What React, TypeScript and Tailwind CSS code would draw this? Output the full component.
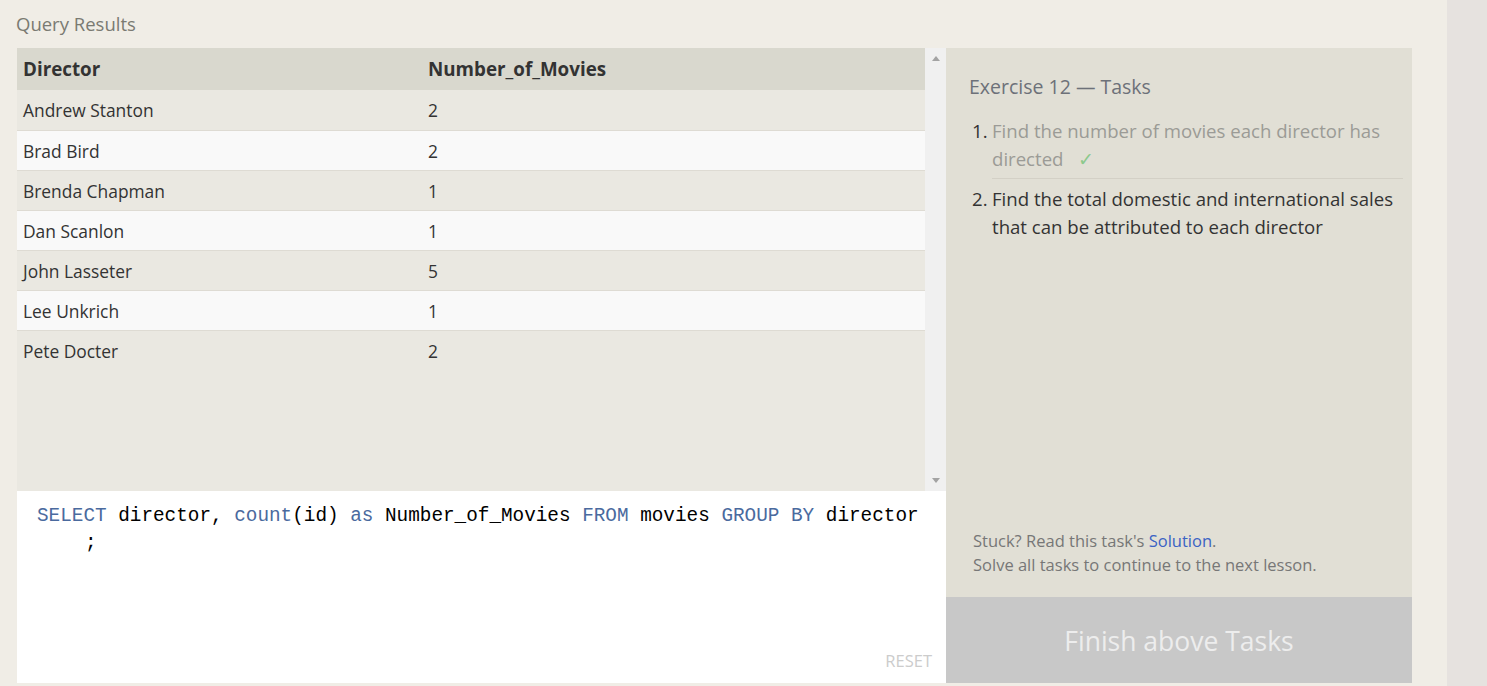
import React from "react";

const rows = [
  { director: "Andrew Stanton", count: 2 },
  { director: "Brad Bird", count: 2 },
  { director: "Brenda Chapman", count: 1 },
  { director: "Dan Scanlon", count: 1 },
  { director: "John Lasseter", count: 5 },
  { director: "Lee Unkrich", count: 1 },
  { director: "Pete Docter", count: 2 },
];

const sans = "font-['Open_Sans','Noto_Sans',sans-serif]";

function Kw({ children }: { children: React.ReactNode }) {
  return <span className="text-[#4a6a9e]">{children}</span>;
}

export default function App() {
  return (
    <div className={`flex h-[686px] w-[1487px] overflow-hidden bg-[#f0ede6] ${sans}`}>
      <div className="flex w-[1447px] flex-col pl-[17px]">
        <div className="-ml-[1px] h-[48px] pt-[10px] text-[18.5px] leading-[28px] text-[#7a7a72]">Query Results</div>
        <div className="flex h-[635px]">
          {/* left column */}
          <div className="flex w-[929px] flex-col">
            <div className="flex h-[443px]">
              <div className="flex w-[908px] flex-col bg-[#eae8e1]">
                <div className="flex h-[42px] items-center bg-[#d9d8ce] text-[18.8px] font-bold text-[#333]">
                  <div className="w-[411px] pl-[6px]">Director</div>
                  <div>Number_of_Movies</div>
                </div>
                {rows.map((r, i) => (
                  <div
                    key={r.director}
                    className={`flex h-[40px] items-center pt-[1px] text-[17.4px] text-[#333] ${i > 0 ? "border-t border-[#dedbd3]" : ""} ${i % 2 === 1 ? "bg-[#f9f9f9]" : "bg-[#eae8e1]"}`}
                  >
                    <div className="w-[411px] pl-[6px]">{r.director}</div>
                    <div>{r.count}</div>
                  </div>
                ))}
              </div>
              <div className="flex w-[21px] flex-col items-center justify-between bg-[#f0f0f0] py-[8px]">
                <div className="h-0 w-0 border-x-[4px] border-b-[5px] border-x-transparent border-b-[#a3a3a3]" />
                <div className="h-0 w-0 border-x-[4px] border-t-[5px] border-x-transparent border-t-[#a3a3a3]" />
              </div>
            </div>
            <div className="flex flex-1 flex-col bg-white">
              <div className="flex-1 pl-[20px] pt-[12px] font-['Liberation_Mono',monospace] text-[19.33px] leading-[27px] text-black">
                <div>
                  <Kw>SELECT</Kw> director, <Kw>count</Kw>(id) <Kw>as</Kw> Number_of_Movies <Kw>FROM</Kw> movies <Kw>GROUP</Kw> <Kw>BY</Kw> director
                </div>
                <div className="pl-[48px]">;</div>
              </div>
              <div className="self-end pb-[12px] pr-[14px] text-[16.5px] leading-[20px] text-[#cccccc]">RESET</div>
            </div>
          </div>
          {/* right panel */}
          <div className="flex w-[466px] flex-col bg-[#e1dfd5]">
            <div className="flex-1 pl-[23px] pr-[9px] pt-[26px]">
              <div className="text-[19.5px] leading-[26px] text-[#6d7179]">Exercise 12 — Tasks</div>
              <ol className="mt-[17px] text-[18.6px] leading-[28px]">
                <li className="flex">
                  <span className="w-[23px] pl-[3px] text-[#333]">1.</span>
                  <div className="flex-1 border-b border-[#d3d0c6] pb-[5px] text-[#9b9b96]">
                    Find the number of movies each director has directed <span className="ml-[10px] text-[#8cc98c]">✓</span>
                  </div>
                </li>
                <li className="mt-[6px] flex">
                  <span className="w-[23px] pl-[3px] text-[#333]">2.</span>
                  <div className="flex-1 text-[#333]">Find the total domestic and international sales that can be attributed to each director</div>
                </li>
              </ol>
            </div>
            <div className="pb-[20px] pl-[27px] text-[16.5px] leading-[24px] text-[#777]">
              <div>
                Stuck? Read this task's <span className="text-[#3b63c4]">Solution</span>.
              </div>
              <div>Solve all tasks to continue to the next lesson.</div>
            </div>
            <div className="flex h-[86px] items-center justify-center bg-[#c8c8c8] pt-[3px] text-[26.5px] text-[#ededed]">Finish above Tasks</div>
          </div>
        </div>
      </div>
      <div className="flex-1 bg-[#e6e2df]" />
    </div>
  );
}
